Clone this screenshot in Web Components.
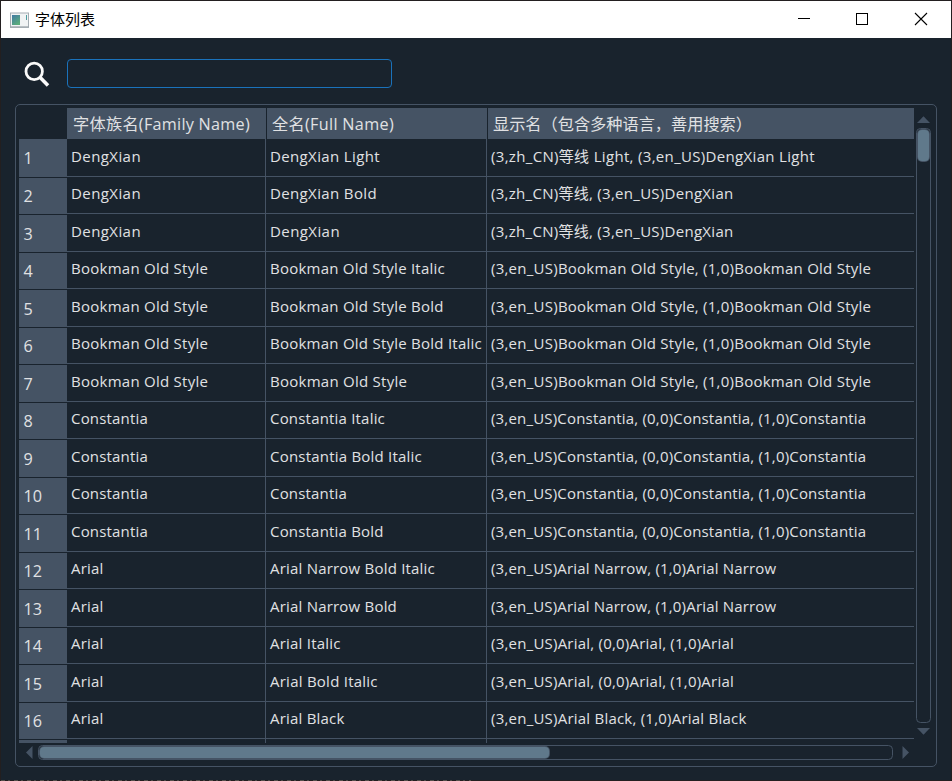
<!DOCTYPE html>
<html lang="zh-CN"><head><meta charset="utf-8"><title>字体列表</title>
<style>html,body{margin:0;width:952px;height:781px;overflow:hidden;background:#19232d}</style></head>
<body>
<font-window></font-window>
<script>
const define=(name,html,setup)=>customElements.define(name,class extends HTMLElement{
  connectedCallback(){
    if(this.shadowRoot)return;
    const t=document.createElement('template');t.innerHTML=html;
    this.attachShadow({mode:'open'}).append(t.content.cloneNode(true));
    if(setup)setup(this,this.shadowRoot);
  }
});

// Text run spread to a given advance width through letter spacing.
define('fit-text',`<style>:host{display:block;white-space:pre}span{display:inline-block}</style><span><slot></slot></span>`,(el,root)=>{
  const w=+el.getAttribute('w'),s=root.querySelector('span'),n=[...el.textContent].length;
  if(w&&n)s.style.letterSpacing=((w-s.getBoundingClientRect().width)/n)+'px';
});

define('title-bar',`<style>
:host{display:flex;align-items:center;height:37px;background:#fff;color:#000;font:15px/37px "Liberation Sans","Noto Sans CJK SC",sans-serif}
.app{width:19px;height:16px;margin-left:9px}
.t{margin-left:6px;flex:1}
.ctl{display:flex;margin-right:2px}.ctl svg{display:block;width:58px;height:37px}
</style>
<svg class="app" viewBox="0 0 19 16"><defs><linearGradient id="g" x2="0.6" y2="1"><stop stop-color="#4179a4"/><stop offset="1" stop-color="#5bad7c"/></linearGradient></defs><rect x=".5" y="1" width="18" height="14" fill="#f1f3f4" stroke="#a5adb3"/><path d="M0 15.2h19" stroke="#929ca3"/><rect x="2" y="3" width="8" height="10" fill="url(#g)"/><path d="M16.5 3v5" stroke="#4f9da0"/></svg>
<span class="t"><slot></slot></span>
<div class="ctl">
<svg viewBox="0 0 58 37"><path d="M23 17.5h12" stroke="#000"/></svg>
<svg viewBox="0 0 58 37"><rect x="23.5" y="12.5" width="11" height="11" fill="none" stroke="#000"/></svg>
<svg viewBox="0 0 58 37"><path d="M24 12l12 12M36 12l-12 12" stroke="#000" stroke-width="1.1"/></svg>
</div>`);

define('search-row',`<style>
:host{display:flex;align-items:flex-start;height:66px;padding:0 0 0 22px;box-sizing:border-box}
svg{display:block;width:28px;height:28px;margin-top:22px}
.f{box-sizing:border-box;width:325px;height:29px;margin:21px 0 0 16px;border:1px solid #1a72bb;border-radius:4px}
</style>
<svg viewBox="0 0 28 28" fill="none" stroke="#fafafa"><circle cx="11.2" cy="11.4" r="8.2" stroke-width="2.8"/><path d="M17.2 17.6L25 25.4" stroke-width="3.6"/></svg>
<div class="f"></div>`);

define('scroll-bar',`<style>
:host{display:flex;align-items:center;box-sizing:border-box}
:host([vertical]){flex-direction:column}
svg{display:block;flex:none;fill:#455364}
.track{flex:1;box-sizing:border-box;border:1px solid #455364;border-radius:4.5px;width:15px;display:flex}
.thumb{background:#60798b;border-radius:4px;box-shadow:0 0 0 1px #455364}
:host(:not([vertical])) .track{width:auto;height:15px}
</style><div class="track"><div class="thumb"></div></div>`,(el,root)=>{
  const v=el.hasAttribute('vertical'),tr=root.querySelector('.track'),th=root.querySelector('.thumb'),len=el.getAttribute('thumb')+'px';
  const mk=d=>{const t=document.createElement('template');t.innerHTML='<svg width="'+(v?15:7)+'" height="'+(v?7:15)+'"><path d="'+d+'"/></svg>';return t.content.firstChild};
  tr.before(mk(v?'M1 7L7.5 0.3L14 7z':'M6.5 1L0 7.5L6.5 14z'));
  tr.after(mk(v?'M1 0L7.5 6.7L14 0z':'M0.5 1L7 7.5L0.5 14z'));
  tr.style.margin=v?'5px 0 5px':'0 9px 0 5px';
  th.style.margin='1px';
  if(v){th.style.width='100%';th.style.height=len}else th.style.width=len;
});

define('table-row',`<style>
:host{display:grid;grid-template-columns:48px 199px 221px 427px;grid-template-rows:100%;box-sizing:border-box;overflow:hidden;color:#e0e1e3;font:15px/35px "Open Sans","Noto Sans CJK SC",sans-serif}
:host([even]){line-height:33px}
.n{background:#455364;border-top:1px solid #19232d;font-size:16.2px;line-height:38px;padding-left:4.5px;box-sizing:border-box}
:host([first]) .n,:host([even]) .n{line-height:36px}
:host([first]) .n{border-top-color:#455364}
::slotted(fit-text){box-sizing:border-box;border-right:1px solid #455364;border-bottom:1px solid #455364;padding-left:4px}
::slotted(:last-child){border-right:0}
</style><div class="n"></div><slot></slot>`,(el,root)=>{root.querySelector('.n').textContent=el.getAttribute('n')||''});

define('table-head',`<style>
:host{display:grid;grid-template-columns:48px 199px 1px 220px 1px 426px;height:31px;color:#e0e1e3;font:16.2px/32px "Open Sans","Noto Sans CJK SC",sans-serif}
div{background:#455364;padding-left:6px;overflow:hidden}i{background:#19232d}.c{background:none}
.k{padding-left:5px}
</style><div class="c"></div><div><fit-text w="177">字体族名(Family Name)</fit-text></div><i></i><div class="k"><fit-text w="122">全名(Full Name)</fit-text></div><i></i><div class="k"><fit-text w="259">显示名（包含多种语言，善用搜索）</fit-text></div>`);

define('font-table',`<style>
:host{display:grid;grid-template-columns:895px 1fr;grid-template-rows:635px 1fr;box-sizing:border-box;width:922px;height:663px;margin-left:14px;border:1px solid #455364;border-radius:5px;padding:3px}
.view{overflow:hidden}
.v{padding:8px 0 8px;width:15px;margin-left:2px}
.h{grid-column:1/3;padding:0 24px 0 7px;height:19px}
</style><div class="view"><table-head></table-head></div><scroll-bar class="v" vertical thumb="31"></scroll-bar><scroll-bar class="h" thumb="509"></scroll-bar>`,(el,root)=>{
  const D=['DengXian',70],B=['Bookman Old Style',137.2],C=['Constantia',77],A=['Arial',32.5];
  const b=['(3,en_US)Bookman Old Style, (1,0)Bookman Old Style',380.2],c=['(3,en_US)Constantia, (0,0)Constantia, (1,0)Constantia',375.3],n=['(3,en_US)Arial Narrow, (1,0)Arial Narrow',285.3],a=['(3,en_US)Arial, (0,0)Arial, (1,0)Arial',243],d=['(3,zh_CN)等线, (3,en_US)DengXian',242.5];
  const rows=[
    [D,['DengXian Light',110],['(3,zh_CN)等线 Light, (3,en_US)DengXian Light',324]],
    [D,['DengXian Bold',107],d],[D,D,d],
    [B,['Bookman Old Style Italic',175],b],[B,['Bookman Old Style Bold',173.7],b],[B,['Bookman Old Style Bold Italic',212],b],[B,B,b],
    [C,['Constantia Italic',115],c],[C,['Constantia Bold Italic',152],c],[C,C,c],[C,['Constantia Bold',113.6],c],
    [A,['Arial Narrow Bold Italic',165],n],[A,['Arial Narrow Bold',127],n],
    [A,['Arial Italic',70.7],a],[A,['Arial Bold Italic',107.8],a],[A,['Arial Black',74.6],['(3,en_US)Arial Black, (1,0)Arial Black',255.5]],
    [['',0],['',0],['',0]]];
  const view=root.querySelector('.view');
  rows.forEach((r,i)=>{
    const e=document.createElement('table-row');
    if(i<16)e.setAttribute('n',i+1);
    if(!i)e.setAttribute('first','');
    if(i%2)e.setAttribute('even','');
    e.style.height=(i%2?37:38)+'px';
    e.innerHTML=r.map(([t,w])=>`<fit-text w="${w}">${t}</fit-text>`).join('');
    view.append(e);
  });
});

define('font-window',`<style>
:host{display:flex;flex-direction:column;box-sizing:border-box;width:952px;height:781px;background:#19232d;border:1px solid #231f20;border-bottom:0}
.edge{height:1px;margin-top:auto;background:repeating-linear-gradient(90deg,#55504c 0 4px,#231f20 4px 7px,#4b4846 7px 9px,#231f20 9px 13px) 0 0/470px 1px no-repeat #231f20}
</style><title-bar>字体列表</title-bar><search-row></search-row><font-table></font-table><div class="edge"></div>`);
</script>
</body></html>
